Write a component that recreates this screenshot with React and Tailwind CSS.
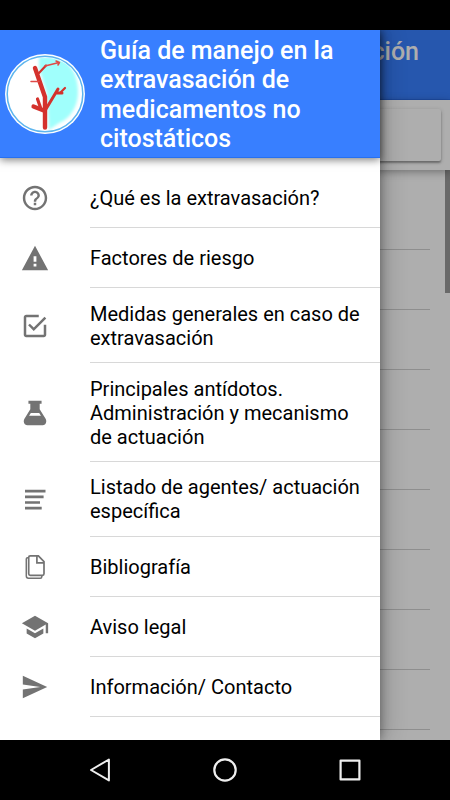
import {
  IoMdCheckboxOutline,
  IoMdFlask,
  IoMdHelpCircleOutline,
  IoMdSchool,
  IoMdSend,
  IoMdWarning,
} from "react-icons/io";

function LinesIcon() {
  return (
    <svg viewBox="0 0 30 30" className="h-[30px] w-[30px]" fill="currentColor">
      <path d="M5 4.8h20.5v2.6H5zM5 10.6h18.6v2.6H5zM5 16.2h15v2.6H5zM5 21.8h16.7v2.6H5z" />
    </svg>
  );
}

function PagesIcon() {
  return (
    <svg
      viewBox="0 0 30 30"
      className="h-[30px] w-[30px]"
      fill="none"
      stroke="currentColor"
      strokeWidth="1.7"
    >
      <path
        d="M8.4 5.8H7.6a1.3 1.3 0 0 0-1.3 1.3V24a2.2 2.2 0 0 0 2.2 2.2H20.3a1.5 1.5 0 0 0 1.5-1.5V23.6"
        strokeWidth="1.5"
      />
      <path d="M10.3 3.8H18.4L24 9.6V21.8a1.6 1.6 0 0 1-1.6 1.6H10.3a1.6 1.6 0 0 1-1.6-1.6V5.4A1.6 1.6 0 0 1 10.3 3.8z" />
      <path d="M16.9 3.8V10.9H24" />
    </svg>
  );
}

function Logo() {
  return (
    <svg viewBox="0 0 80 80" className="h-20 w-20 shrink-0">
      <defs>
        <filter id="soft" x="-20%" y="-20%" width="140%" height="140%">
          <feGaussianBlur stdDeviation="1.8" />
        </filter>
        <clipPath id="disc">
          <circle cx="40" cy="40" r="36.5" />
        </clipPath>
      </defs>
      <circle cx="40" cy="40" r="40" fill="#fff" />
      <g clipPath="url(#disc)">
        <path
          d="M34 3H53C65 8 73 20 73 38C73 54 64 65 54 69L44 76L42 40L34 14z"
          fill="#a0fffc"
          filter="url(#soft)"
        />
      </g>
      <circle cx="40" cy="40" r="37.8" fill="none" stroke="#5db5ee" strokeWidth="1.5" />
      <g fill="none" stroke="#d4322d" strokeLinecap="round" strokeLinejoin="round">
        <path d="M30 14L40 43V73.5" strokeWidth="4.4" />
        <path d="M40 57L28.5 52.5" strokeWidth="4.2" />
        <path d="M36 55L32.5 45" strokeWidth="3.2" />
        <path d="M41 55L53 35M52 39H57" strokeWidth="3" />
        <path d="M56 38L60 34M34 19L41 11.5" strokeWidth="2.2" />
        <path d="M40 12L54 8.5M51 7L54.5 8.5L53 11M26 27.5H34" strokeWidth="1.5" stroke="#e04a48" />
      </g>
    </svg>
  );
}

const items = [
  {
    icon: <IoMdHelpCircleOutline size={30} />,
    lines: ["¿Qué es la extravasación?"],
    pad: "pt-[13.5px] pb-[12.5px]",
  },
  {
    icon: <IoMdWarning size={30} />,
    lines: ["Factores de riesgo"],
    pad: "pt-[13.5px] pb-[12.5px]",
  },
  {
    icon: <IoMdCheckboxOutline size={30} />,
    lines: ["Medidas generales en caso de", "extravasación"],
    pad: "pt-[14px] pb-[12px]",
  },
  {
    icon: <IoMdFlask size={30} />,
    lines: ["Principales antídotos.", "Administración y mecanismo", "de actuación"],
    pad: "pt-[14px] pb-[12px]",
  },
  {
    icon: <LinesIcon />,
    lines: ["Listado de agentes/ actuación", "específica"],
    pad: "pt-[13px] pb-[13px]",
  },
  {
    icon: <PagesIcon />,
    lines: ["Bibliografía"],
    pad: "pt-[13.5px] pb-[12.5px]",
  },
  {
    icon: <IoMdSchool size={30} />,
    lines: ["Aviso legal"],
    pad: "pt-[13.5px] pb-[12.5px]",
  },
  {
    icon: <IoMdSend size={30} />,
    lines: ["Información/ Contacto"],
    pad: "pt-[13.5px] pb-[12.5px]",
  },
];

function Page() {
  return (
    <div className="flex h-full flex-col bg-[#aeaeae]">
      <div className="flex h-[70px] shrink-0 justify-end border-b border-[#1d4ca3] bg-[#2657ae] pt-[7px] pr-[31px]">
        <p className="text-[25px] leading-[29.3px] font-medium text-[#aeaeae]">ción</p>
      </div>
      <div className="z-10 h-[70px] shrink-0 bg-[#aeaeae] pt-[9px] pr-[9px] shadow-[0_2px_8px_rgba(0,0,0,0.35)]">
        <div className="h-[52px] rounded-[2px] bg-[#aeaeae] shadow-[0_2px_2px_rgba(0,0,0,0.3),0_1px_4px_rgba(0,0,0,0.18)]"></div>
      </div>
      <div className="flex min-h-0 flex-1 justify-between">
        <div className="mr-[15px] flex-1 overflow-hidden pt-5">
          {[1, 2, 3, 4, 5, 6, 7, 8, 9].map((n) => (
            <div key={n} className="h-[60px] border-b border-[#8e8e8e]"></div>
          ))}
        </div>
        <div className="h-[123px] w-[5px] bg-[#696969]"></div>
      </div>
    </div>
  );
}

function Drawer() {
  return (
    <div className="absolute inset-y-0 left-0 flex w-[380px] flex-col bg-white shadow-[0_0_10px_rgba(0,0,0,0.4),8px_0_20px_rgba(0,0,0,0.15)]">
      <div className="flex h-32 shrink-0 items-center border-b border-[#2670f0] bg-[#387fff] pl-[5px] shadow-[0_2px_8px_rgba(0,0,0,0.5)]">
        <Logo />
        <h1 className="ml-[15px] pt-[2px] text-[25px] leading-[29.4px] font-medium whitespace-nowrap text-white">
          Guía de manejo en la
          <br />
          extravasación de
          <br />
          medicamentos no
          <br />
          citostáticos
        </h1>
      </div>
      <ul className="pt-[10px]">
        {items.map((item) => (
          <li key={item.lines[0]} className="flex items-center pl-5">
            <div className="w-[70px] text-[#737373]">{item.icon}</div>
            <div
              className={`flex min-h-[60px] flex-1 flex-col justify-center border-b border-[#d8d8d8] text-[20px] leading-6 whitespace-nowrap text-black ${item.pad}`}
            >
              {item.lines.map((line) => (
                <p key={line}>{line}</p>
              ))}
            </div>
          </li>
        ))}
      </ul>
    </div>
  );
}

function NavBar() {
  return (
    <div className="flex h-[60px] items-center justify-center gap-[95px] bg-black text-[#efefef]">
      <svg viewBox="0 0 30 30" className="h-[30px] w-[30px]" fill="none" stroke="currentColor" strokeWidth="2" strokeLinejoin="round">
        <path d="M23.9 4.5V25.4L6 15z" />
      </svg>
      <svg viewBox="0 0 30 30" className="h-[30px] w-[30px]" fill="none" stroke="currentColor" strokeWidth="2.2">
        <circle cx="15" cy="15" r="10.7" />
      </svg>
      <svg viewBox="0 0 30 30" className="h-[30px] w-[30px]" fill="none" stroke="currentColor" strokeWidth="2.2" strokeLinejoin="round">
        <path d="M5.6 5.6H24.4V24.4H5.6z" />
      </svg>
    </div>
  );
}

function App() {
  return (
    <div className="flex h-[800px] w-[450px] flex-col overflow-hidden bg-black font-[Roboto,sans-serif]">
      <div className="h-[30px] shrink-0 bg-black"></div>
      <div className="relative h-[710px] overflow-hidden">
        <Page />
        <div className="absolute inset-0 z-20">
          <Drawer />
        </div>
      </div>
      <NavBar />
    </div>
  );
}

export default App;
